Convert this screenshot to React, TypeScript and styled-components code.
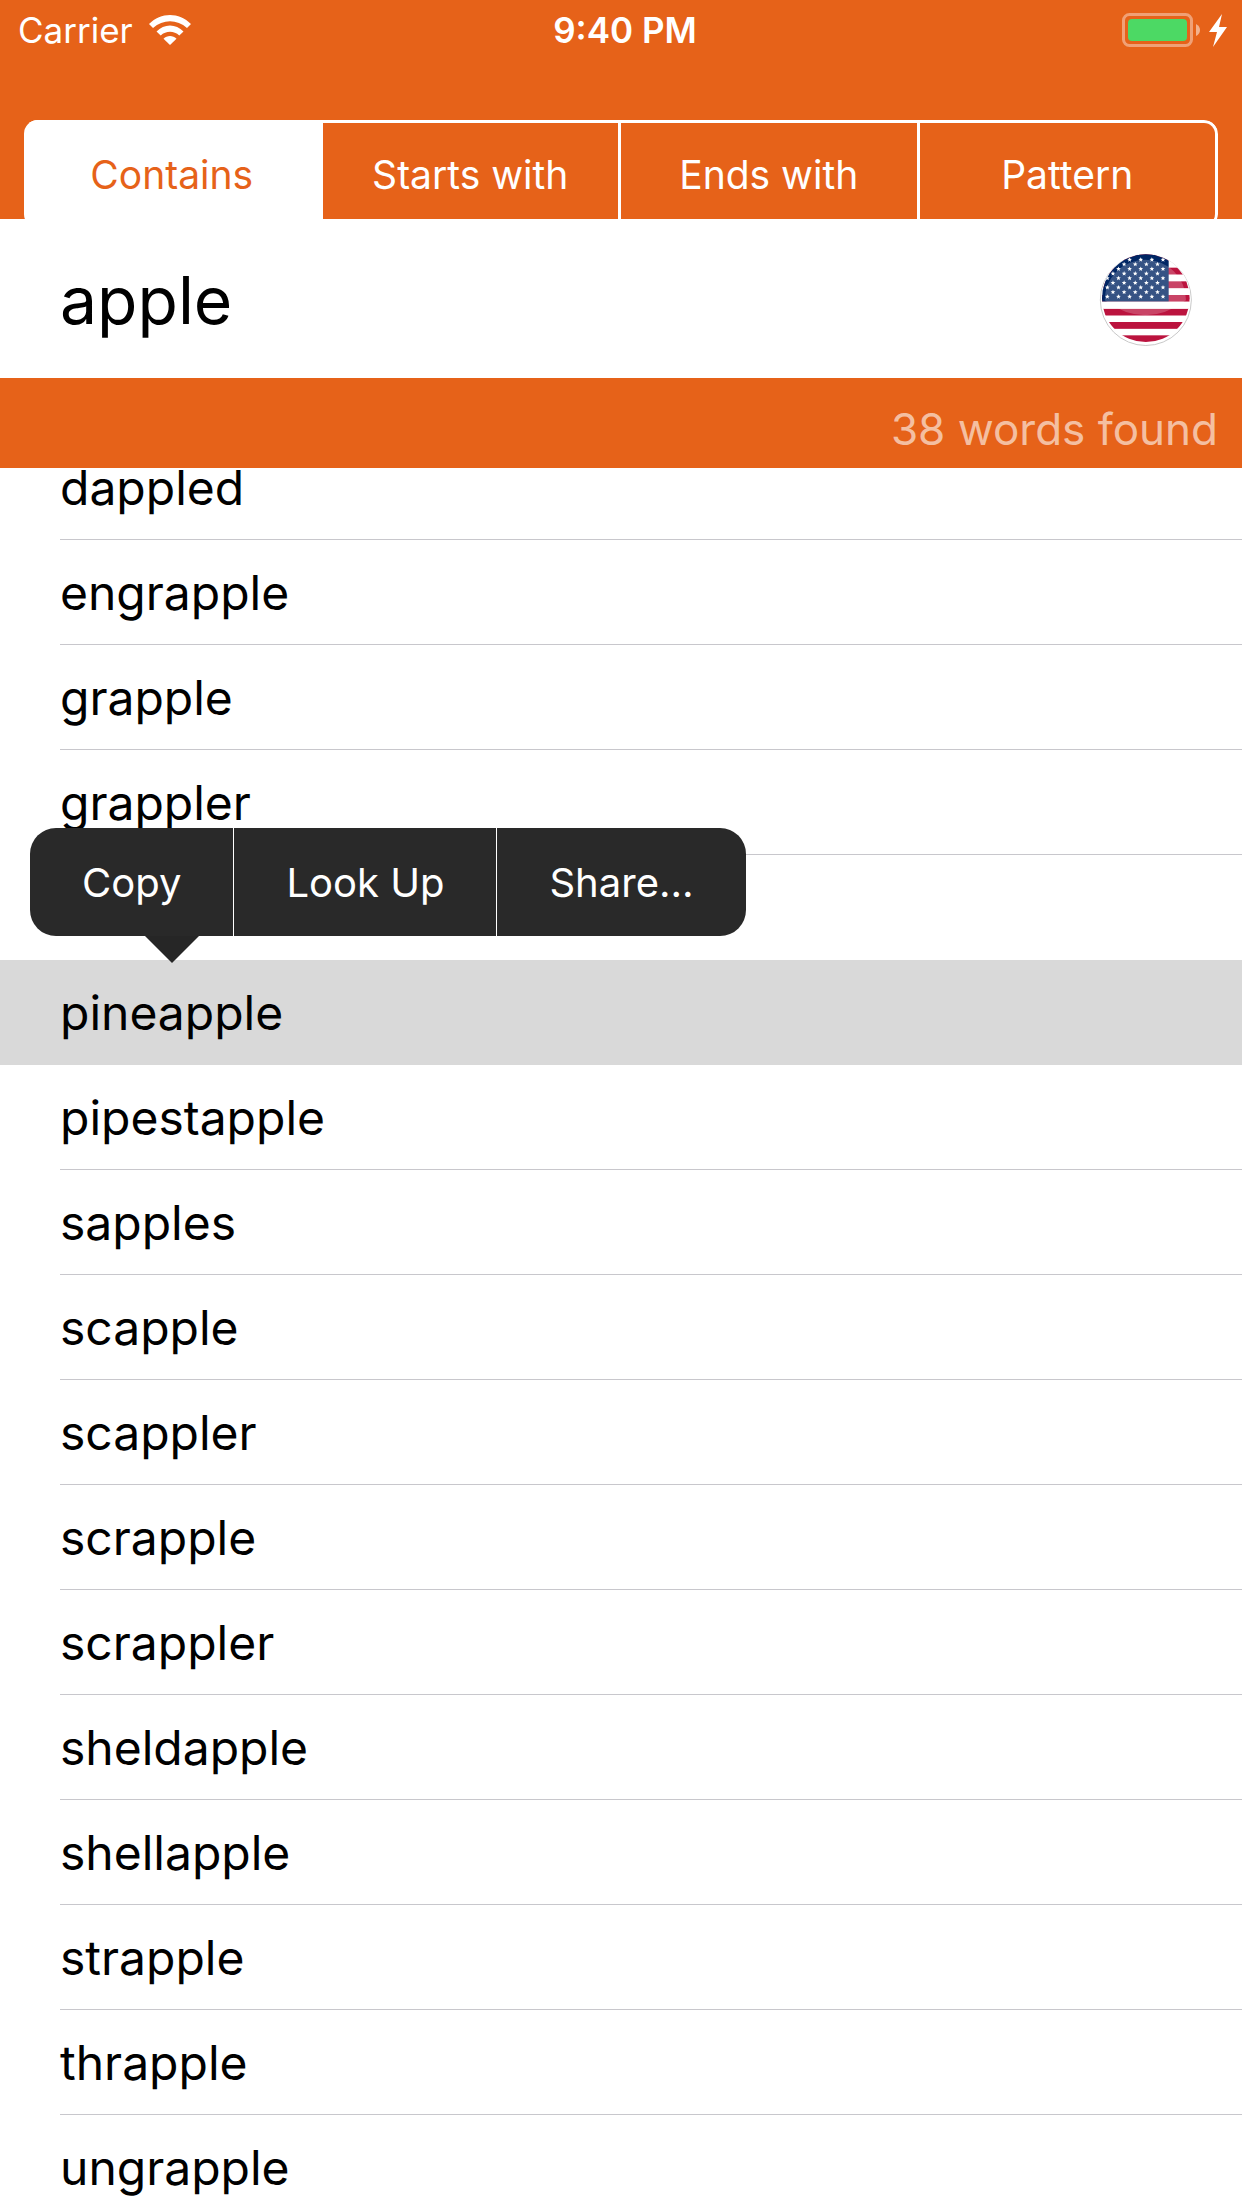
import React, { useState } from "react";
import styled, { createGlobalStyle } from "styled-components";

const orange = "#e66219";

const GlobalStyle = createGlobalStyle`
  *, *::before, *::after { box-sizing: border-box; }
  body {
    margin: 0;
    background: #fff;
    color: #000;
    font-family: Inter, "Liberation Sans", sans-serif;
  }
  button, input { font: inherit; color: inherit; border: 0; margin: 0; padding: 0; background: none; }
`;

const Screen = styled.div`
  height: 100vh;
  display: flex;
  flex-direction: column;
  overflow: hidden;
`;

const Header = styled.header`
  flex: none;
  height: 219px;
  overflow: hidden;
  background: ${orange};
  color: #fff;
`;

const StatusBar = styled.div`
  display: grid;
  grid-template-columns: 1fr auto 1fr;
  align-items: center;
  height: 60px;
  padding: 0 14px 0 18px;
  font-size: 35px;
  line-height: 60px;
`;

const Network = styled.div`
  display: flex;
  align-items: center;
  gap: 16px;
`;

const Clock = styled.time`
  padding-left: 4px;
  font-weight: 600;
`;

const Power = styled.div`
  display: flex;
  align-items: center;
  justify-content: flex-end;
`;

const Tabs = styled.div`
  display: grid;
  grid-template-columns: repeat(4, 1fr);
  height: 108px;
  margin: 60px 24px 0;
  border-radius: 14px;
  overflow: hidden;
`;

const Tab = styled.button<{ $active: boolean }>`
  border: solid #fff;
  border-width: 3px 3px 3px 0;
  background: ${(p) => (p.$active ? "#fff" : orange)};
  color: ${(p) => (p.$active ? orange : "#fff")};
  font-size: 39px;
  cursor: pointer;
  &:last-child { border-radius: 0 14px 14px 0; }
`;

const SearchBar = styled.div`
  flex: none;
  display: flex;
  align-items: center;
  height: 159px;
  padding: 3px 49px 0 60px;
  background: #fff;
`;

const SearchInput = styled.input`
  flex: 1;
  min-width: 0;
  height: 100px;
  font-size: 66px;
  outline: none;
`;

const FlagButton = styled.button`
  display: flex;
  cursor: pointer;
`;

const Summary = styled.div`
  flex: none;
  height: 90px;
  padding: 6px 24px 0 0;
  background: ${orange};
  color: rgba(255, 255, 255, 0.6);
  font-size: 44px;
  line-height: 90px;
  text-align: right;
`;

const Results = styled.main`
  flex: 1;
  min-height: 0;
  overflow: hidden;
`;

const WordList = styled.ul`
  list-style: none;
  margin: -33px 0 0;
  padding: 0;
`;

const WordItem = styled.li<{ $selected: boolean }>`
  position: relative;
  padding-left: 60px;
  background: ${(p) => (p.$selected ? "#d9d9d9" : "transparent")};
`;

const WordButton = styled.button<{ $line: boolean }>`
  display: block;
  width: 100%;
  height: 105px;
  border-bottom: 1px solid ${(p) => (p.$line ? "#c8c7cc" : "transparent")};
  font-size: 48px;
  text-align: left;
  cursor: pointer;
`;

const Menu = styled.div`
  position: absolute;
  z-index: 1;
  left: 30px;
  bottom: calc(100% + 24px);
  display: flex;
  height: 108px;
  border-radius: 26px;
  background: #292929;
  color: #fff;
  &::after {
    content: "";
    position: absolute;
    top: 100%;
    left: 115px;
    border: solid transparent;
    border-width: 27px 27px 0;
    border-top-color: #262626;
  }
`;

const MenuButton = styled.button`
  padding: 0 52px;
  font-size: 40px;
  white-space: nowrap;
  cursor: pointer;
  & + & { border-left: 1px solid #fff; }
`;

const WifiIcon = () => (
  <svg width="42" height="30" viewBox="0 0 42 30" fill="#fff" aria-hidden="true">
    <path d="M0 9C12-3 30-3 42 9L38 13C28 4 14 4 4 13Z" />
    <path d="M7.500 16.500C15 8.500 27 8.500 34.500 16.500L30.300 20.500C25 15.500 17 15.500 11.700 20.500Z" />
    <path d="M14.500 23.700C18 20 24 20 27.500 23.700L21 30Z" />
  </svg>
);

const BatteryIcon = () => (
  <svg width="106" height="34" viewBox="0 0 106 34" aria-hidden="true">
    <rect x="1.500" y="1.500" width="68" height="31" rx="6" fill="none" stroke="#fff" strokeOpacity="0.4" strokeWidth="3" />
    <rect x="6" y="6" width="59" height="22" rx="4" fill="#4cd964" />
    <path d="M74 11Q78 13 78 17T74 23Z" fill="#fff" fillOpacity="0.5" />
    <path d="M100 1L87 19H95L91 34L105 14H97Z" fill="#fff" />
  </svg>
);

const starPath = (cx: number, cy: number) =>
  "M" +
  Array.from({ length: 10 }, (_, i) => {
    const r = i % 2 ? 3.2 : 7.4;
    const a = (Math.PI * i) / 5 - Math.PI / 2;
    return `${(cx + r * Math.cos(a)).toFixed(2)} ${(cy + r * Math.sin(a)).toFixed(2)}`;
  }).join("L") +
  "Z";

const stars = Array.from({ length: 9 }, (_, row) =>
  Array.from({ length: row % 2 ? 5 : 6 }, (_, col) =>
    starPath((row % 2 ? 293.5 : 310) - col * 33.4, 90 + row * 13.9)
  ).join("")
).join("");

const FlagIcon = () => (
  <svg width="94" height="94" viewBox="118 70 282 282" aria-hidden="true">
    <defs>
      <clipPath id="disc"><circle cx="258.500" cy="205.500" r="131.500" /></clipPath>
    </defs>
    <circle cx="258.500" cy="211" r="136.500" fill="#fff" stroke="#bdbdbd" strokeWidth="2.500" />
    <circle cx="258.500" cy="207" r="134" fill="#fff" />
    <g clipPath="url(#disc)">
      {[73, 114, 155, 196, 237, 277, 317].map((y) => (
        <rect key={y} x="118" y={y} width="282" height="20.500" fill="#bb133e" />
      ))}
      <rect x="118" y="70" width="209" height="146" fill="#002664" />
      <path d="M135 212A122 122 0 0 1 379 212Q257 302 135 212Z" fill="#fff" fillOpacity="0.21" />
      <rect x="118" y="216" width="282" height="21" fill="#fff" />
      <path d={stars} fill="#fff" />
    </g>
  </svg>
);

const modes = ["Contains", "Starts with", "Ends with", "Pattern"];

const words = [
  "dappled", "engrapple", "grapple", "grappler", "", "pineapple", "pipestapple", "sapples",
  "scapple", "scappler", "scrapple", "scrappler", "sheldapple", "shellapple", "strapple",
  "thrapple", "ungrapple",
];

export default function App() {
  const [mode, setMode] = useState("Contains");
  const [query, setQuery] = useState("apple");
  const [selected, setSelected] = useState(5);

  return (
    <Screen>
      <GlobalStyle />
      <Header>
        <StatusBar>
          <Network>Carrier <WifiIcon /></Network>
          <Clock>9:40 PM</Clock>
          <Power><BatteryIcon /></Power>
        </StatusBar>
        <Tabs role="tablist">
          {modes.map((m) => (
            <Tab key={m} role="tab" aria-selected={m === mode} $active={m === mode} onClick={() => setMode(m)}>
              {m}
            </Tab>
          ))}
        </Tabs>
      </Header>
      <SearchBar>
        <SearchInput aria-label="Search letters" value={query} onChange={(e) => setQuery(e.target.value)} />
        <FlagButton aria-label="Dictionary language"><FlagIcon /></FlagButton>
      </SearchBar>
      <Summary>38 words found</Summary>
      <Results>
        <WordList>
          {words.map((word, i) => (
            <WordItem key={i} $selected={i === selected}>
              <WordButton $line={i !== selected && i + 1 !== selected} onClick={() => setSelected(i)}>
                {word}
              </WordButton>
              {i === selected && (
                <Menu>
                  <MenuButton>Copy</MenuButton>
                  <MenuButton>Look Up</MenuButton>
                  <MenuButton>Share…</MenuButton>
                </Menu>
              )}
            </WordItem>
          ))}
        </WordList>
      </Results>
    </Screen>
  );
}
